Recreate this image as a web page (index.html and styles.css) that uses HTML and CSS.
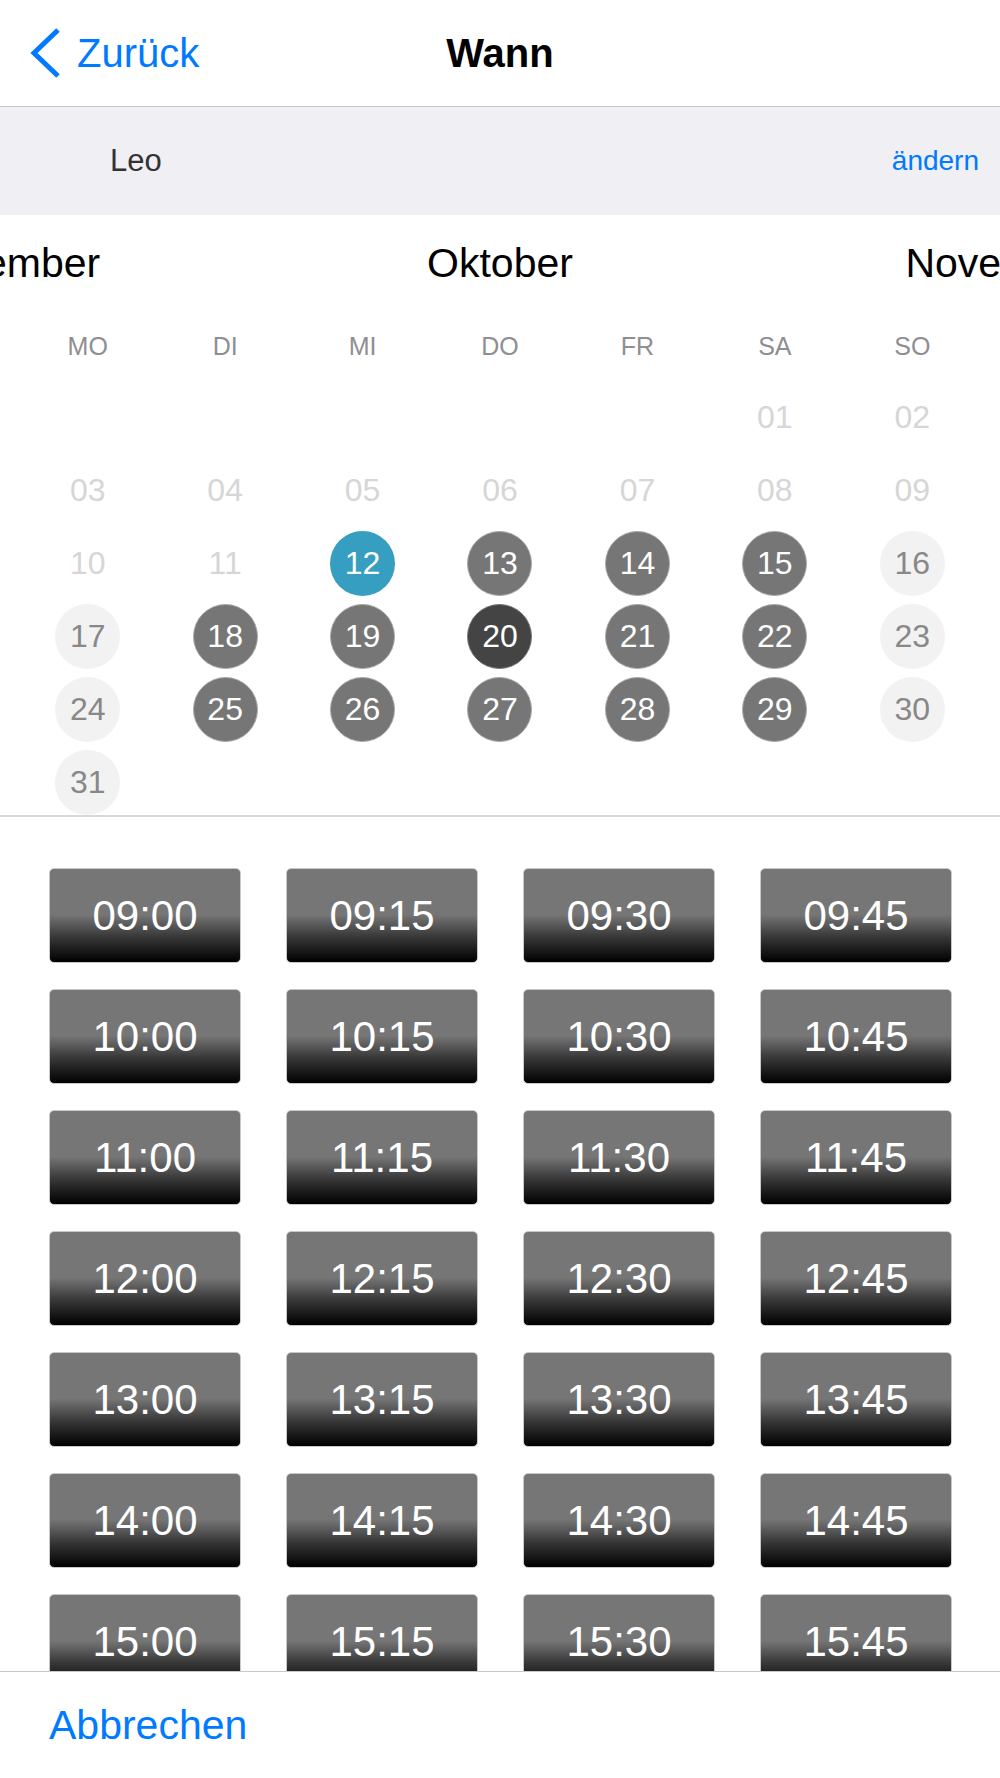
FILE: index.html
```html
<html>
<head>
  <title>Wann</title>
  <link rel="stylesheet" href="styles.css">
</head>
<body>
  <header class="navbar">
    <a class="back" href="#">
      <svg class="chevron" width="32" height="52" viewBox="0 0 32 52">
        <path d="M29 3 L5 26 L29 49" fill="none" stroke="#007aff" stroke-width="5" stroke-linejoin="miter"/>
      </svg>
      <span>Zurück</span>
    </a>
    <h1 class="title">Wann</h1>
    <div></div>
  </header>

  <div class="context">
    <span class="who">Leo</span>
    <a class="change" href="#">ändern</a>
  </div>

  <section class="calendar">
    <div class="months">
      <div class="month">September</div>
      <div class="month">Oktober</div>
      <div class="month">November</div>
    </div>
    <div class="weekdays">
      <div>MO</div><div>DI</div><div>MI</div><div>DO</div><div>FR</div><div>SA</div><div>SO</div>
    </div>
    <div class="days">
      <div class="day"></div><div class="day"></div><div class="day"></div><div class="day"></div><div class="day"></div>
      <div class="day off">01</div><div class="day off">02</div>
      <div class="day off">03</div><div class="day off">04</div><div class="day off">05</div><div class="day off">06</div><div class="day off">07</div><div class="day off">08</div><div class="day off">09</div>
      <div class="day off">10</div><div class="day off">11</div><div class="day selected">12</div><div class="day open">13</div><div class="day open">14</div><div class="day open">15</div><div class="day closed">16</div>
      <div class="day closed">17</div><div class="day open">18</div><div class="day open">19</div><div class="day open today">20</div><div class="day open">21</div><div class="day open">22</div><div class="day closed">23</div>
      <div class="day closed">24</div><div class="day open">25</div><div class="day open">26</div><div class="day open">27</div><div class="day open">28</div><div class="day open">29</div><div class="day closed">30</div>
      <div class="day closed">31</div>
    </div>
  </section>

  <section class="slots">
    <div class="slot-grid">
      <button class="slot">09:00</button><button class="slot">09:15</button><button class="slot">09:30</button><button class="slot">09:45</button>
      <button class="slot">10:00</button><button class="slot">10:15</button><button class="slot">10:30</button><button class="slot">10:45</button>
      <button class="slot">11:00</button><button class="slot">11:15</button><button class="slot">11:30</button><button class="slot">11:45</button>
      <button class="slot">12:00</button><button class="slot">12:15</button><button class="slot">12:30</button><button class="slot">12:45</button>
      <button class="slot">13:00</button><button class="slot">13:15</button><button class="slot">13:30</button><button class="slot">13:45</button>
      <button class="slot">14:00</button><button class="slot">14:15</button><button class="slot">14:30</button><button class="slot">14:45</button>
      <button class="slot">15:00</button><button class="slot">15:15</button><button class="slot">15:30</button><button class="slot">15:45</button>
    </div>
  </section>

  <footer class="toolbar">
    <a class="cancel" href="#">Abbrechen</a>
  </footer>
</body>
</html>
```

FILE: styles.css
```css
body {
  font-family: 'Liberation Sans', Arial, sans-serif;
  margin: 0;
  height: 100vh;
  display: flex;
  flex-direction: column;
  overflow: hidden;
  background: white;
  color: #000;
}
a {
  text-decoration: none;
  color: #007aff;
}
.navbar {
  height: 106px;
  flex: none;
  display: grid;
  grid-template-columns: 1fr auto 1fr;
  align-items: center;
  border-bottom: 1px solid #c8c7cc;
}
.back {
  display: flex;
  align-items: center;
  padding-left: 29px;
  font-size: 40px;
  line-height: 48px;
}
.chevron {
  margin-right: 16px;
}
.title {
  margin: 0;
  font-size: 40px;
  line-height: 48px;
  font-weight: bold;
}
.context {
  height: 108px;
  flex: none;
  display: flex;
  align-items: center;
  justify-content: space-between;
  background: #efeff4;
  padding: 0 21px 0 110px;
}
.who {
  font-size: 31px;
  color: #333;
}
.change {
  font-size: 28px;
}
.calendar {
  flex: none;
  padding-top: 23px;
  border-bottom: 2px solid #d9d9d9;
  overflow: hidden;
}
.months {
  display: flex;
  margin: 0 -250px;
  height: 50px;
}
.month {
  flex: 1;
  text-align: center;
  font-size: 41px;
  line-height: 50px;
}
.weekdays {
  display: grid;
  grid-template-columns: repeat(7, 1fr);
  padding: 0 19px;
  margin-top: 43px;
  font-size: 25px;
  line-height: 30px;
  color: #8e8e93;
  text-align: center;
}
.days {
  display: grid;
  grid-template-columns: repeat(7, 1fr);
  grid-auto-rows: 65px;
  row-gap: 8px;
  padding: 0 19px;
  margin-top: 24px;
}
.day {
  width: 65px;
  height: 65px;
  justify-self: center;
  box-sizing: border-box;
  border-radius: 50%;
  display: flex;
  align-items: center;
  justify-content: center;
  font-size: 32px;
}
.day.off {
  color: #d6d6d6;
}
.day.closed {
  background: #f2f2f2;
  color: #888;
}
.day.open {
  background: #767676;
  border: 1px solid #a8a8a8;
  color: white;
}
.day.today {
  background: #444;
  border-color: #777;
}
.day.selected {
  background: #369ec0;
  color: white;
}
.slots {
  flex: 1;
  overflow: hidden;
  padding: 51px 48px 0 49px;
}
.slot-grid {
  display: grid;
  grid-template-columns: repeat(4, 192px);
  grid-auto-rows: 95px;
  column-gap: 45px;
  row-gap: 26px;
}
.slot {
  font-family: 'Liberation Sans', Arial, sans-serif;
  font-size: 42px;
  color: white;
  border: 1px solid #c8c8c8;
  border-radius: 5px;
  padding: 0;
  background: linear-gradient(#767676 0%, #767676 49%, #3a3a3a 72%, #000 100%);
}
.toolbar {
  height: 106px;
  flex: none;
  display: flex;
  align-items: center;
  padding-left: 49px;
  border-top: 1px solid #c8c7cc;
  background: white;
}
.cancel {
  font-size: 41px;
}
```
